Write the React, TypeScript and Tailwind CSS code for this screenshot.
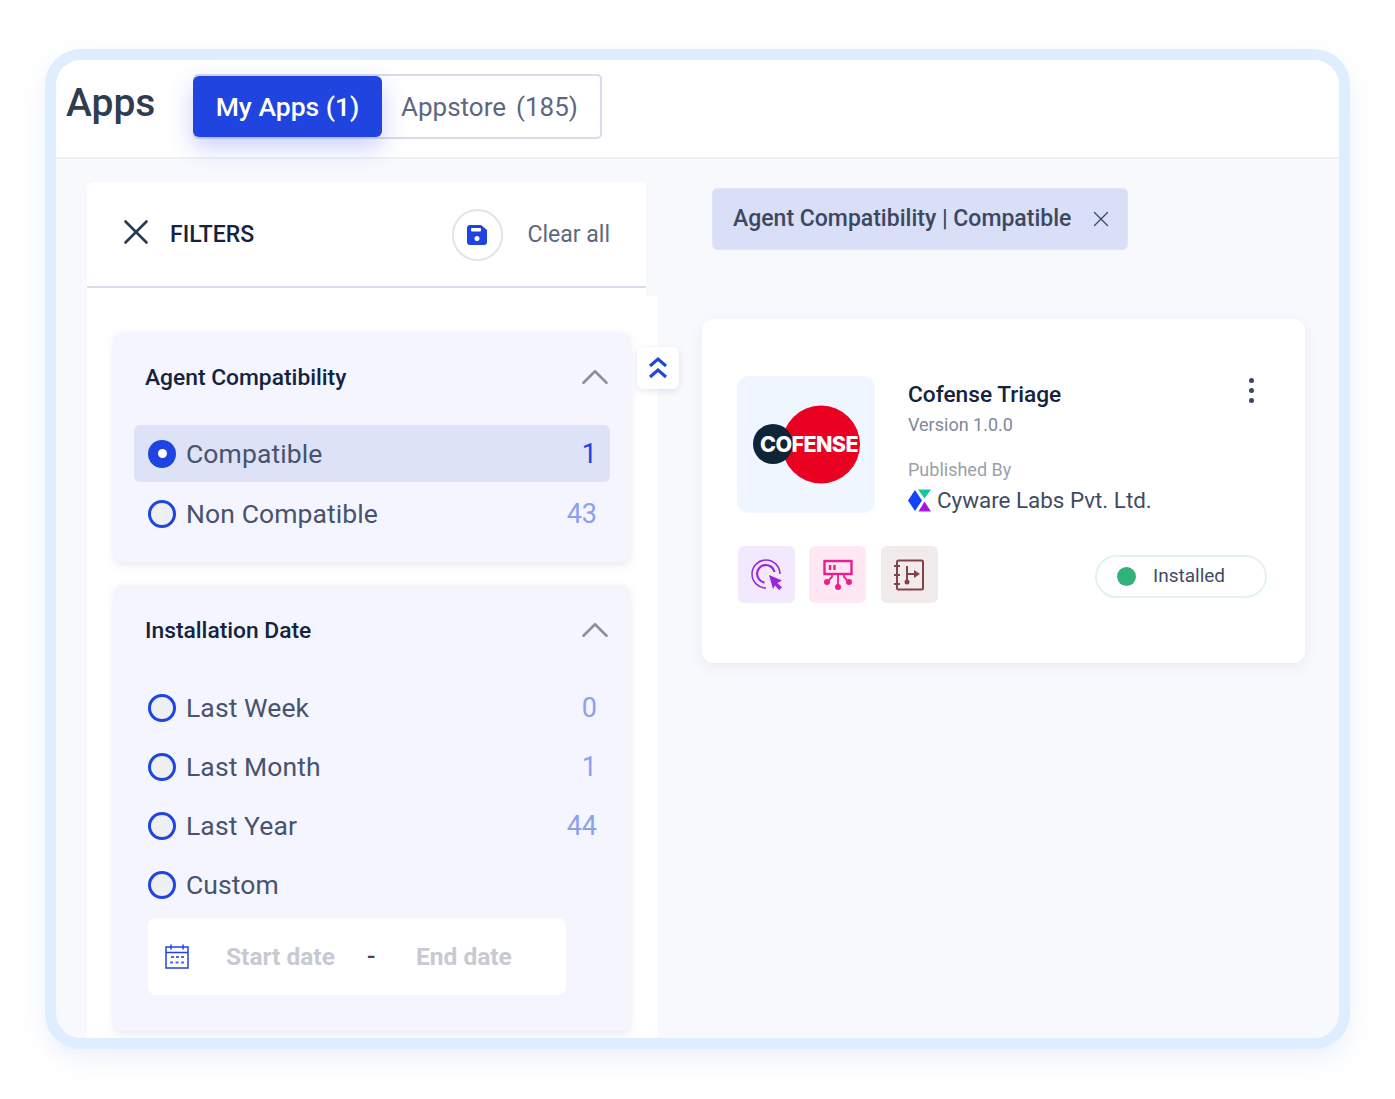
import { ChevronUp, X } from 'lucide-react'

const Radio = ({ checked }: { checked?: boolean }) => (
  checked ? (
    <span className='w-[28px] h-[28px] shrink-0 rounded-full bg-[#1f44e0] flex items-center justify-center'>
      <span className='w-[9px] h-[9px] rounded-full bg-white'></span>
    </span>
  ) : (
    <span className='w-[28px] h-[28px] shrink-0 rounded-full bg-[#eeeff3] border-[3.5px] border-[#1f44e0]'></span>
  )
)

const FilterRow = ({ label, count, checked }: { label: string; count?: number; checked?: boolean }) => (
  <div className={`flex items-center pl-[14px] pr-[13px] rounded-md ${checked ? 'h-[57px] mb-[2px] bg-[#dde2f7]' : 'h-[59px]'}`}>
    <Radio checked={checked} />
    <span className='ml-[10px] text-[26.5px] tracking-[0.1px] text-[#48536f]'>{label}</span>
    {count !== undefined && (
      <span className={`ml-auto mt-[2px] text-[27px] ${checked ? 'text-[#1f44e0]' : 'text-[#8ba0ee]'}`}>{count}</span>
    )}
  </div>
)

const CardTitle = ({ title }: { title: string }) => (
  <div className='flex items-center justify-between h-[93px] pl-[31px] pr-[20px]'>
    <span className='text-[22.8px] font-medium text-[#14233f]'>{title}</span>
    <ChevronUp size={46} strokeWidth={1.3} className='text-[#8a8f99] mt-[-4px] mr-[-8px]' />
  </div>
)

const SaveIcon = () => (
  <svg width='20' height='20' viewBox='0 0 20 20'>
    <path d='M3 0h11l6 5v12a3 3 0 0 1-3 3H3a3 3 0 0 1-3-3V3a3 3 0 0 1 3-3z' fill='#1f44e0' />
    <rect x='4' y='3' width='10' height='3.500' rx='1' fill='#fff' />
    <circle cx='10' cy='13.500' r='2.500' fill='#fff' />
  </svg>
)

const CalendarIcon = () => (
  <svg width='24' height='25' viewBox='0 0 24 25' fill='none' stroke='#1f44e0' strokeWidth='1.5'>
    <rect x='1' y='3' width='22' height='21' />
    <path d='M1 8.500h22M6 0.500v5M18 0.500v5' />
    <path d='M6 13h3M11 13h3M16 13h3M5 18.500h3M10.500 18.500h3M16 18.500h3' strokeWidth='2' strokeOpacity='0.8' />
  </svg>
)

const CofenseLogo = () => (
  <svg width='108' height='82' viewBox='0 0 108 82'>
    <circle cx='68' cy='40.500' r='39' fill='#ea0020' />
    <circle cx='20' cy='40' r='20' fill='#0f2435' />
    <text x='56' y='47.500' textAnchor='middle' fontFamily='Inter, sans-serif' fontWeight='800' fontSize='21.500' letterSpacing='-0.6' fill='#fff'>COFENSE</text>
  </svg>
)

const CywareLogo = () => (
  <svg width='24' height='23' viewBox='0 0 24 23'>
    <path d='M0 11.500 L7 1 L14 11.500 L7 22 Z' fill='#1246f5' />
    <path d='M10 0.500 H23 L16.500 9.500 Z' fill='#16c79a' />
    <path d='M16.500 12.500 L23 22.500 H10.500 Z' fill='#a617d8' />
  </svg>
)

const TargetIcon = () => (
  <svg width='32' height='32' viewBox='0 0 32 32' fill='none' stroke='#9b25e0'>
    <path d='M15 29A14 14 0 1 1 29 15' strokeWidth='1.500' />
    <path d='M13.500 23.500A8.800 8.800 0 1 1 23.500 13' strokeWidth='2.200' />
    <path d='M18 16 L31 21.500 L26.500 24 L31 28.500 L28 31 L24 26.500 L22 30 Z' fill='#9b25e0' stroke='none' />
  </svg>
)

const NetworkIcon = () => (
  <svg width='32' height='32' viewBox='0 0 32 32' fill='none' stroke='#ee1c8e' strokeWidth='2.400'>
    <rect x='2.500' y='2' width='27' height='13' />
    <path d='M8 6v5M12.500 6v5' />
    <path d='M16 15v13M10 15v3l-3 3M22 15v3l3 3' strokeWidth='1.800' />
    <circle cx='16' cy='28' r='3' fill='#ee1c8e' stroke='none' />
    <circle cx='5' cy='23' r='3' fill='#ee1c8e' stroke='none' />
    <circle cx='27' cy='23' r='3' fill='#ee1c8e' stroke='none' />
  </svg>
)

const NotebookIcon = () => (
  <svg width='32' height='32' viewBox='0 0 32 32' fill='none' stroke='#84424a' strokeWidth='2'>
    <rect x='3' y='1.500' width='26' height='29' rx='1.500' />
    <path d='M0 7h6M0 16h6M0 25h6' />
    <path d='M13 7v16M13 15h9' />
    <path d='M20 11l6 4-6 4z' fill='#84424a' stroke='none' />
    <circle cx='13' cy='23' r='2.500' fill='#84424a' stroke='none' />
  </svg>
)

const DoubleChevron = () => (
  <svg width='20' height='24' viewBox='0 0 20 24' fill='none' stroke='#1f44e0' strokeWidth='3'>
    <path d='M2 10 L10 3 L18 10' />
    <path d='M2 21 L10 14 L18 21' />
  </svg>
)

export default function App() {
  return (
    <div className="w-[1395px] h-[1099px] bg-white pl-[45px] pt-[49px] [font-family:Roboto,sans-serif]">
      <div className='w-[1305px] h-[1000px] border-[11px] border-[#deeeff] rounded-[36px] overflow-hidden bg-[#f8f9fd] shadow-[0_10px_26px_rgba(190,210,235,0.3)] flex flex-col'>

        <div className='h-[99px] shrink-0 bg-white border-b-2 border-[#f0f1f6] flex items-center pl-[10px]'>
          <h1 className='w-[127px] text-[39px] font-medium text-[#2f3d4f] mt-[-11px]'>Apps</h1>
          <div className='flex h-[65px] w-[409px] border-2 border-[#d7dbec] rounded-[5px] mt-[-5px]'>
            <button className='w-[189px] h-[61px] my-auto ml-[-2px] pt-[2px] bg-[#1f44e0] text-white rounded-md text-[26.5px] font-medium shadow-[0_10px_24px_rgba(31,68,224,0.25)]'>My Apps (1)</button>
            <span className='flex items-center pl-[19px] pt-[2px] text-[26px] text-[#5d6880] gap-[10px]'>
              <span>Appstore</span>
              <span>(185)</span>
            </span>
          </div>
        </div>

        <div className='flex flex-1 min-h-0'>
          <div className='w-[571px] ml-[31px] mt-[23px] shrink-0 flex flex-col'>
            <div className='w-[559px] h-[106px] shrink-0 bg-white rounded-tl-md border-b-2 border-[#d7dbec] flex items-center pl-[28px] pr-[36px] pt-[2px]'>
              <X size={42} strokeWidth={1.5} className='text-[#2a3a4f] mt-[-6px]' />
              <span className='ml-[13px] text-[23px] font-medium text-[#14233f]'>FILTERS</span>
              <span className='ml-auto w-[51px] h-[52px] rounded-full border-2 border-[#e3e4ea] flex items-center justify-center'>
                <SaveIcon />
              </span>
              <span className='ml-[25px] text-[23px] text-[#5d6880]'>Clear all</span>
            </div>
            <div className='w-[559px] h-[8px] shrink-0 bg-white'></div>

            <div className='relative flex-1 bg-white pl-[27px] pt-[36px]'>
              <button className='absolute left-[550px] top-[51px] w-[42px] h-[42px] bg-white rounded-md shadow-[0_2px_6px_rgba(120,130,180,0.2)] flex items-center justify-center'>
                <DoubleChevron />
              </button>

              <div className='w-[516px] h-[230px] bg-[#f4f5fe] rounded-lg shadow-[0_3px_8px_rgba(120,125,160,0.16)] px-[20px]'>
                <div className='mx-[-20px]'><CardTitle title='Agent Compatibility' /></div>
                <FilterRow label='Compatible' count={1} checked />
                <FilterRow label='Non Compatible' count={43} />
              </div>

              <div className='w-[516px] h-[446px] mt-[23px] bg-[#f4f5fe] rounded-lg shadow-[0_3px_8px_rgba(120,125,160,0.16)] px-[20px]'>
                <div className='mx-[-20px]'><CardTitle title='Installation Date' /></div>
                <FilterRow label='Last Week' count={0} />
                <FilterRow label='Last Month' count={1} />
                <FilterRow label='Last Year' count={44} />
                <FilterRow label='Custom' />
                <div className='ml-[14px] mt-[4px] w-[418px] h-[77px] bg-white rounded-lg flex items-center pl-[17px] text-[24.5px] font-bold text-[#c7c9d3]'>
                  <CalendarIcon />
                  <span className='ml-[37px] mt-[1px] w-[141px]'>Start date</span>
                  <span className='text-[#3a4660] w-[49px] font-medium'>-</span>
                  <span className='mt-[1px]'>End date</span>
                </div>
              </div>
            </div>
          </div>

          <div className='ml-[44px] mt-[29px] flex flex-col items-start'>
            <div className='ml-[10px] w-[416px] h-[62px] bg-[#d9dff7] rounded-[5px] border border-[#e0e4f9] flex items-center pl-[20px] text-[#3c4860]'>
              <span className='pt-[1px] text-[23px] font-medium whitespace-nowrap'>Agent Compatibility | Compatible</span>
              <X size={26} strokeWidth={1.15} className='ml-[17px] text-[#3c4860]' />
            </div>

            <div className='mt-[69px] w-[603px] h-[344px] bg-white rounded-xl shadow-[0_4px_14px_rgba(130,140,190,0.12)] pl-[35px] pr-[38px] pt-[57px]'>
              <div className='flex'>
                <div className='w-[138px] h-[137px] shrink-0 rounded-xl bg-[#eff6ff] flex items-center justify-center pl-[1px]'>
                  <CofenseLogo />
                </div>
                <div className='ml-[33px] flex-1'>
                  <div className='flex items-start justify-between pt-[1px]'>
                    <span className='text-[22.7px] font-medium leading-[36px] text-[#14233f]'>Cofense Triage</span>
                    <span className='flex flex-col gap-[5px] mt-[1px] mr-[13px]'>
                      <i className='w-[5px] h-[5px] rounded-full bg-[#3a4660]'></i>
                      <i className='w-[5px] h-[5px] rounded-full bg-[#3a4660]'></i>
                      <i className='w-[5px] h-[5px] rounded-full bg-[#3a4660]'></i>
                    </span>
                  </div>
                  <div className='text-[18px] leading-[24px] text-[#808898]'>Version 1.0.0</div>
                  <div className='text-[18px] leading-[24px] mt-[21px] text-[#9a9fac]'>Published By</div>
                  <div className='flex items-center mt-[4px]'>
                    <CywareLogo />
                    <span className='ml-[5px] text-[22.4px] leading-[28px] text-[#3f4b63]'>Cyware Labs Pvt. Ltd.</span>
                  </div>
                </div>
              </div>

              <div className='flex items-center mt-[32px] pl-[1px]'>
                <span className='w-[57px] h-[57px] rounded-md bg-[#f3e9fd] flex items-center justify-center'><TargetIcon /></span>
                <span className='ml-[14px] w-[57px] h-[57px] rounded-md bg-[#ffe7f3] flex items-center justify-center'><NetworkIcon /></span>
                <span className='ml-[15px] w-[57px] h-[57px] rounded-md bg-[#f2ebec] flex items-center justify-center'><NotebookIcon /></span>
                <span className='ml-auto mt-[4px] w-[172px] h-[43px] rounded-full border-2 border-[#e3f3ec] flex items-center pl-[20px]'>
                  <i className='w-[19px] h-[19px] rounded-full bg-[#30b27a]'></i>
                  <span className='ml-[17px] text-[19px] text-[#3f4b63]'>Installed</span>
                </span>
              </div>
            </div>
          </div>
        </div>
      </div>
    </div>
  )
}
